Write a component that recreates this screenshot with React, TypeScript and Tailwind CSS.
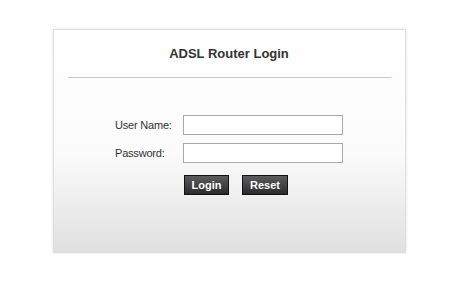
export default function App() {
  return (
    <div className="min-h-screen bg-white pt-[29px] font-['Liberation_Sans',Arial,sans-serif]">
      <div className="mx-auto h-[224px] w-[353px] border border-[#dedede] bg-[linear-gradient(to_bottom,#ffffff_0%,#fbfbfb_55%,#e0e0e0_100%)] shadow-[0_0_3px_rgba(0,0,0,0.12)]">
        <h1 className="pt-[16px] text-center text-[13px] font-bold leading-[15px] text-[#333]">ADSL Router Login</h1>
        <div className="mx-[14px] mt-[16px] border-t border-[#c8c8c8]" />

        <form className="mt-[37px] flex flex-col items-center" onSubmit={(e) => e.preventDefault()}>
          <div className="grid grid-cols-[68px_160px] items-center gap-y-[8px] text-[11px] tracking-[-0.2px] text-[#333]">
            <label htmlFor="user">User Name:</label>
            <input id="user" type="text" className="h-[20px] border border-[#a9a9a9] bg-white px-1 outline-none" />
            <label htmlFor="pass">Password:</label>
            <input id="pass" type="password" className="h-[20px] border border-[#a9a9a9] bg-white px-1 outline-none" />
            <div />
            <div className="mt-[4px] flex gap-[13px] pl-px tracking-normal">
              <button type="submit" className="h-[20px] w-[45px] border border-[#111] bg-[linear-gradient(to_bottom,#5c5c5c,#2b2b2b)] text-[11px] font-bold text-white">
                Login
              </button>
              <button type="reset" className="h-[20px] w-[46px] border border-[#111] bg-[linear-gradient(to_bottom,#5c5c5c,#2b2b2b)] text-[11px] font-bold text-white">
                Reset
              </button>
            </div>
          </div>
        </form>
      </div>
    </div>
  );
}
